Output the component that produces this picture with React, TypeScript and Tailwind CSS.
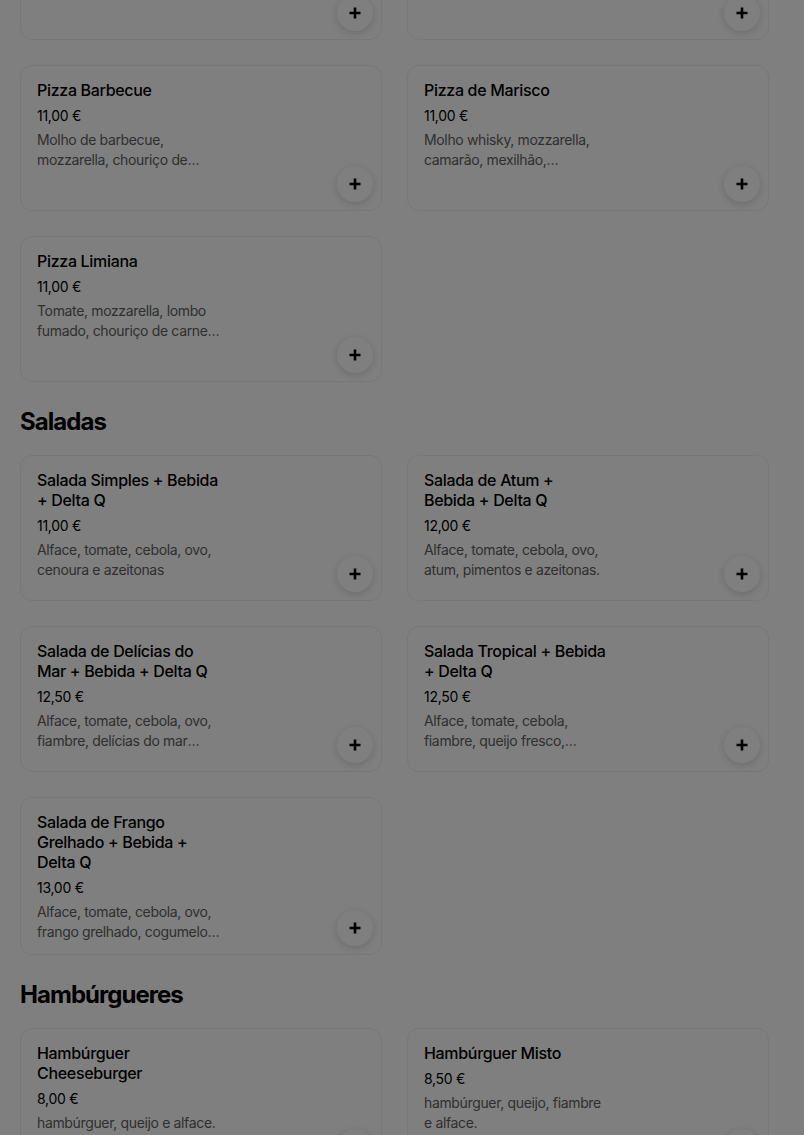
import React from "react";

interface Item {
  name: string;
  price: string;
  desc: string;
}

interface Section {
  title?: string;
  items: Item[];
}

const sections: Section[] = [
  {
    items: [
      { name: "Pizza Quatro Queijos", price: "10,50 €", desc: "Tomate, mozzarella, gorgonzola, queijo de cabra e parmesão." },
      { name: "Pizza Vegetariana", price: "10,50 €", desc: "Tomate, mozzarella, pimentos, cogumelos, cebola e azeitonas." },
      { name: "Pizza Barbecue", price: "11,00 €", desc: "Molho de barbecue, mozzarella, chouriço de carne, bacon e cebola." },
      { name: "Pizza de Marisco", price: "11,00 €", desc: "Molho whisky, mozzarella, camarão, mexilhão, caranguejo e ameijoas." },
      { name: "Pizza Limiana", price: "11,00 €", desc: "Tomate, mozzarella, lombo fumado, chouriço de carne, salpicão e cebola." },
    ],
  },
  {
    title: "Saladas",
    items: [
      { name: "Salada Simples + Bebida + Delta Q", price: "11,00 €", desc: "Alface, tomate, cebola, ovo, cenoura e azeitonas" },
      { name: "Salada de Atum + Bebida + Delta Q", price: "12,00 €", desc: "Alface, tomate, cebola, ovo, atum, pimentos e azeitonas." },
      { name: "Salada de Delícias do Mar + Bebida + Delta Q", price: "12,50 €", desc: "Alface, tomate, cebola, ovo, fiambre, delícias do mar (surimi), cenoura e azeitonas." },
      { name: "Salada Tropical + Bebida + Delta Q", price: "12,50 €", desc: "Alface, tomate, cebola, fiambre, queijo fresco, ananás e milho." },
      { name: "Salada de Frango Grelhado + Bebida + Delta Q", price: "13,00 €", desc: "Alface, tomate, cebola, ovo, frango grelhado, cogumelos e milho." },
    ],
  },
  {
    title: "Hambúrgueres",
    items: [
      { name: "Hambúrguer Cheeseburger", price: "8,00 €", desc: "hambúrguer, queijo e alface." },
      { name: "Hambúrguer Misto", price: "8,50 €", desc: "hambúrguer, queijo, fiambre e alface." },
    ],
  },
];

function PlusIcon() {
  return (
    <svg width="14" height="14" viewBox="0 0 14 14" fill="none">
      <path d="M7 1.5v11M1.5 7h11" stroke="#000" strokeWidth="2.6" />
    </svg>
  );
}

function ItemCard({ item }: { item: Item }) {
  return (
    <div className="relative min-h-[146px] rounded-xl border border-[#eeeeee] bg-white px-4 pt-[14px] pb-3">
      <p className="w-[183px] text-[16px] leading-5 font-medium tracking-[-0.02em] text-black">{item.name}</p>
      <p className="mt-[6px] text-[14px] leading-5 tracking-[-0.02em] text-black">{item.price}</p>
      <p className="mt-1 line-clamp-2 w-[186px] text-[14px] leading-5 tracking-[-0.025em] text-[#5e5e5e]">{item.desc}</p>
      <button className="absolute right-2 bottom-2 flex h-9 w-9 items-center justify-center rounded-full bg-white shadow-[0_2px_8px_rgba(0,0,0,0.16)]">
        <PlusIcon />
      </button>
    </div>
  );
}

export default function App() {
  return (
    <div className="relative h-[1135px] overflow-hidden bg-white px-5 font-['Inter',sans-serif]">
      <div className="-mt-[106px]">
        {sections.map((s, i) => (
          <section key={i}>
            {s.title && (
              <h2 className="mt-6 mb-[17px] text-[24px] leading-8 font-bold tracking-[-0.04em] text-black">{s.title}</h2>
            )}
            <div className="grid grid-cols-[362px_362px] items-start gap-x-[25px] gap-y-[25px]">
              {s.items.map((it) => (
                <ItemCard key={it.name} item={it} />
              ))}
            </div>
          </section>
        ))}
      </div>
      {/* modal backdrop */}
      <div className="fixed inset-0 bg-black/50" />
    </div>
  );
}
